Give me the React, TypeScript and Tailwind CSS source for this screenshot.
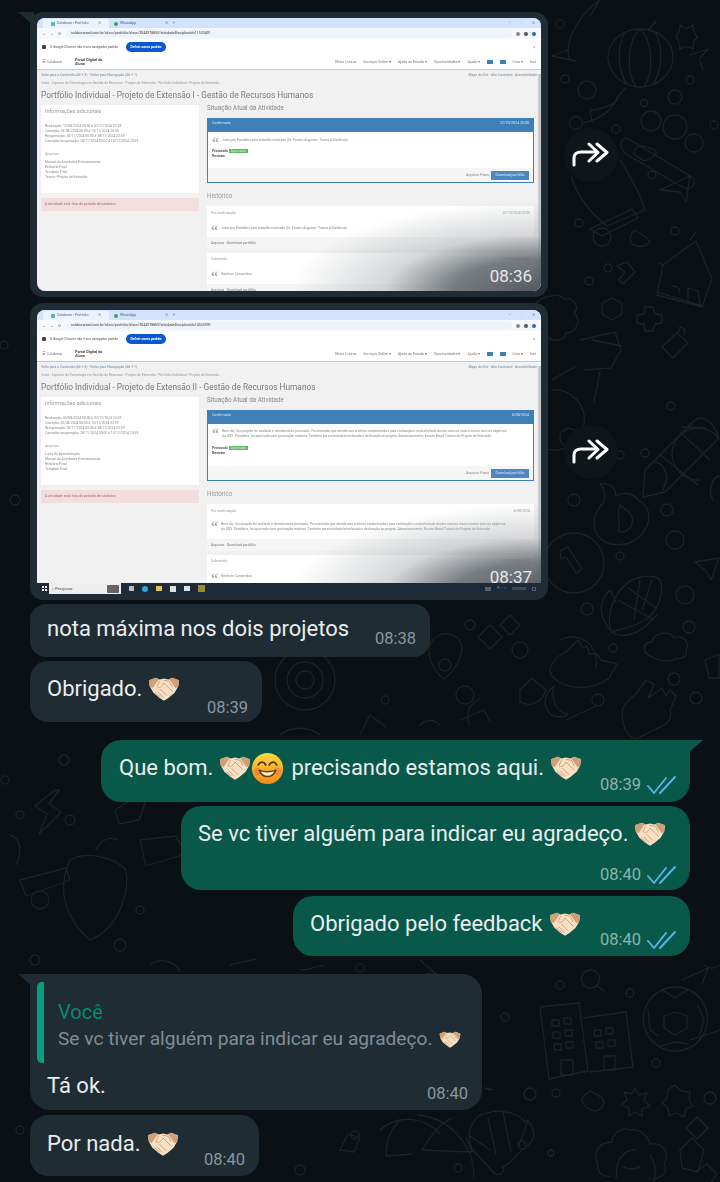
const circles: [number, number, number][] = [
  [565, 79, 4], [587, 90, 9], [560, 24, 4], [675, 97, 7], [690, 80, 4], [644, 103, 3.5], [576, 123, 6.5], [616, 129, 4],
  [651, 121, 10], [675, 127, 12], [694, 143, 9], [714, 125, 4], [652, 175, 4], [602, 237, 9], [579, 223, 4], [675, 231, 4],
  [608, 268, 4], [589, 281, 4], [574, 500, 6], [667, 510, 6], [675, 540, 9], [620, 556, 4], [685, 595, 9], [689, 627, 6],
  [587, 609, 6], [613, 648, 4], [598, 700, 6], [674, 679, 6], [696, 698, 6], [620, 455, 4], [671, 406, 4], [645, 453, 4],
  [505, 1017, 4], [560, 985, 4], [630, 993, 4], [556, 1093, 4], [530, 1094, 6], [656, 1063, 4], [710, 1098, 6], [522, 1145, 4],
  [551, 1153, 3], [458, 1168, 4], [470, 625, 5], [305, 680, 30], [305, 680, 18], [305, 680, 9], [385, 700, 4], [465, 695, 9],
  [445, 665, 6], [520, 650, 8], [35, 960, 5], [70, 820, 5], [64, 760, 5], [20, 815, 4], [140, 910, 4], [40, 900, 9],
  [120, 945, 6], [250, 980, 5], [360, 968, 4], [20, 1130, 4], [300, 1170, 5], [355, 1135, 4], [5, 780, 4], [560, 790, 4],
  [545, 775, 3], [15, 500, 5], [4, 345, 4],
];

const paths = [
  // fish, lantern
  "M570 60c-6-14 3-40 30-60M568 50l-16 6 24 5M600 0l-10 16",
  "M640 29c-18 0-32 13-32 28s14 30 32 30 33-14 33-30-15-28-33-28zM640 29c-12 10-15 42-4 58M640 29c12 10 15 42 4 58M625 32c-8 14-8 38 2 52M655 32c8 14 8 38-2 52",
  "M648 30l8-9M625 88l-8 10c-4 10-12 20-34 25M592 122l-2-12c10 0 22-4 28-11",
  "M680 25c4 4 9 4 13 0 0 5 1 9 4 12-3 3-4 7-4 12-4-3-9-3-13 0 0-5-1-9-4-12 3-3 4-7 4-12z",
  "M690 55l18-6-8 9M700 60l3 10",
  // finger hand, rocket
  "M630 140l60 36c8 5 3 15-6 12l-58-34c-10-8-3-20 4-14zM647 147c-8-3-14 2-13 7l10 7c6-2 14-6 12-10-2-3-6-2-9-4z",
  "M620 160c14 22 22 40 25 50l-38 16c-18-14-30-30-36-50M590 229l42-20 6 9-36 18z",
  "M660 190l30-14-4 26-6-10z",
  "M634 230c8 4 14 8 16 12l-6 4c-16 2-16-8-10-16z",
  "M627 262l8 10-12 12-4-4 6-8-8-6z",
  // house
  "M657 295l6-30 33-24 16 38-10 28zM663 265l-4-2M657 292l46 14M690 240l6-8M672 286c4 0 8 2 8 6M688 288l10 3 2 14-12-3z",
  "M612 298l10 5v11l-10 6-10-6v-11zM645 307l8 0 2 7 7 1v8l-7 1-2 7h-8l-1-7-7-1v-8l7-1z",
  "M662 347l15-14 11 10-15 15zM678 333l2-6 5 2-1 6",
  "M552 296c4-2 10 0 12 3 10-2 16 8 10 14 8 8 2 20-8 20 0 8-14 10-20 2-8 2-16-8-12-14-6-10 2-24 18-25z",
  "M580 340l35-8 6 18-10 18-26 2M592 340l30 6",
  // pencil, flame, badge
  "M645 470l50-50c5-4 12-2 18 6s6 12 2 16l-50 50-22 5zM651 464c6-4 14 0 16 14l-4 12M660 455l38 30M680 432l30 28",
  "M600 484c10-2 18 6 15 12 8-4 18-4 23 4 12 6 15 20 4 34-12 14-34 14-44 2-8-14-2-26 6-34 2-8 0-14-4-18zM620 505c-4 10 2 20-2 26 8 4 16-4 14-14-2-6-8-8-12-12z",
  "M574 533a30 30 0 1 0 0 60 30 30 0 1 0 0-60zM560 551l8-4 14 22-6 4-10-16-5 2z",
  "M552 390a30 30 0 1 1-8 58M560 438a9 9 0 1 0 0-1zM552 380l24-14M600 372l-6 30",
  "M706 428l-24-1M700 480a26 26 0 1 1 20-40M713 500c-6-10 0-24 7-24",
  // corn
  "M612 632c-6-10-2-30 10-44 12-14 34-14 38-8 4 10 0 28-12 38-14 10-26 10-36 14zM618 600l36 20M628 588l28 20M640 580l-6 40M652 580l-10 30M612 632c-14-14-14-30-2-42l6 12M612 632c8 6 24 4 36-8 5-5 8-8 9-10",
  "M695 562l24-4-8 22-6-10z",
  // hands, cloud, moon
  "M550 668c4-8 10-14 16-16l12-12 5 8 4-2 2 8 8 0 4 6 16 4-8 14c-18 14-40 10-50 4-6-4-10-8-9-14z",
  "M622 714c0-10 8-16 14-20l10-14 8 4-6 14 14-10 4 8 4-6 6 6-6 14c2 6 0 10-4 14l-28 14c-10 2-16-12-16-24z",
  "M650 656c-8-4-8-14 2-14 2-10 18-12 22-4 10-4 16 4 12 12 2 6-4 10-10 8-4 4-16 4-26-2z",
  "M554 686c-10 8-12 20-4 28 6 4 14 4 18 0-10 0-18-14-14-28z",
  "M705 660l14-6v24h-10z",
  // left margin doodles
  "M70 860c-14 30-4 60 20 80 30-12 40-50 36-70-10-12-40-20-56-10zM96 850c4-10 14-14 22-10",
  "M55 790l-20 16 12 8-8 20 22-22-12-8 10-14z",
  "M115 810l28-18 4 6-8 22-20 4zM20 880l46-12 4 12-44 16z",
  "M120 990l52-10M140 840l36-4 10 18-40 12zM10 835c8 2 14 14 6 30",
  // bottom right
  "M540 1007l39-4 9 68-39 8zM583 1018l43-6 7 55-43 5M552 1020h7v6h-7zM564 1018h7v6h-7zM553 1032h7v6h-7zM565 1030h7v6h-7zM554 1044h7v6h-7zM566 1042h7v6h-7zM594 1030h7v6h-7zM606 1028h7v6h-7zM596 1042h7v6h-7zM608 1040h7v6h-7zM561 1060h12v15h-12zM604 1056h11v14h-11z",
  "M675 987a32 32 0 1 0 1 0zM675 1012l12 4v12l-12 7-11-7v-12zM662 990l13 8 12-8M648 1010l2 20 8 6M698 1006l6 14-4 14M660 1046l14-4 14 2",
  "M590 970a9 9 0 1 0 1 0zM596 985l8 6",
  "M480 1115c-10 8-14 20-8 34l22 24c6 4 12-2 8-6 10-2 14-14 22-18l8-8c4-8 0-20-8-20-4-6-16-10-30-10zM503 1112l8 40M488 1118l8 36M528 1120l-10 28M470 1136l20 14",
  "M630 1130c10-2 18 6 20 14 14-2 20 10 14 20 6 8-6 18-16 14M630 1130c-8-4-18 4-18 12-14 0-20 12-14 22-2 8 6 14 12 12",
  "M635 1150c-14 0-20 14-18 28M650 1156c6 8 6 18 4 26M622 1166c6 4 14 4 18 0",
  "M590 1091c-4 4-8 4-8 10 2 6 8 10 14 10 6-2 8-6 8-10-4-6-10-8-14-10z",
  "M635 1088l4 7 8-2-3 8 6 5-8 3v7l-7-4-6 4v-8l-8-3 6-5-3-8 8 2z",
  "M675 1085l6 6 9 1-1 8 4 6-7 3-2 8-7-4-8 3-1-8-6-5 5-5 1-8z",
  "M697 1117l11 11-11 11-11-11zM680 1150l12-12 12 12-6 22-16-4z",
  "M695 1172l12-8 10 10-6 8M690 1040l30-10M682 980l26-12-6 16M704 965c6 4 10 4 16 0",
  "M492 1090l-8-2M452 1118c-12 6-22 18-30 32l50 2-6-14M400 1120c-10 10-14 22-14 36l26-2M340 1150l8-16 12 4-6 14z",
  "M418 1115a62 62 0 0 1 56 62M380 1130a42 42 0 0 1 60 4",
  // middle gaps
  "M440 635c10-4 22 2 22 14-2 16-12 26-18 30-10-8-18-22-14-34 2-6 6-8 10-10zM500 625l10-10 10 10-10 10zM490 625l-12 12 12 12 12-12z",
  "M520 690l12-12 14 12c-4 12-14 18-26 12zM560 640c20-10 40 6 36 28M566 720l30-14M470 725c-6-12 0-22 10-26",
  "M460 720l24-10 6 12M280 735c12-10 30-8 40 0M360 735l10-20 16 12M420 725c6-6 14-6 20 0",
  "M150 965c10-8 24-4 30 6M300 970c12 0 20-6 24-4M230 965l26-6M420 960l16 14-10 0",
];

function Wallpaper() {
  return (
    <svg viewBox="0 0 720 1182" fill="none" stroke="#1b2426" strokeWidth="1.3" strokeLinecap="round" strokeLinejoin="round" className="absolute inset-0 h-[1182px] w-[720px]">
      {circles.map(([cx, cy, r], i) => (
        <circle key={i} cx={cx} cy={cy} r={r} />
      ))}
      {paths.map((d, i) => (
        <path key={i} d={d} />
      ))}
    </svg>
  );
}

function Handshake({ size = 32 }: { size?: number }) {
  return (
    <svg width={size} height={size * 0.86} viewBox="0 0 36 31" className="shrink-0">
      <path d="M1 6l8-3 4 2 5-1 5 1 4-2 8 3-1 7-4 7-7 6-5 3-5-3-7-6-4-7z" fill="#f7dfc4" />
      <path d="M1 6l8-3 3 2-7 10-3-2zM35 6l-8-3-3 2 7 10 3-2z" fill="#cf9f78" />
      <path d="M13 7l-3 6c2 2 5 1 6-1l2-3 9 9M18 6l6 1 3 6M11 19l6 6M14 16l7 7M8 20l6 5" fill="none" stroke="#d2a27e" strokeWidth="1.1" strokeLinecap="round" strokeLinejoin="round" />
    </svg>
  );
}

function Smile() {
  return (
    <svg width="33" height="33" viewBox="0 0 36 36" className="shrink-0">
      <defs>
        <linearGradient id="smile" x1="0" y1="0" x2="0" y2="1">
          <stop offset="0" stopColor="#fbdc3f" />
          <stop offset="1" stopColor="#f28a1c" />
        </linearGradient>
      </defs>
      <circle cx="18" cy="18" r="17" fill="url(#smile)" />
      <circle cx="7" cy="21" r="4" fill="#f0634f" opacity=".5" />
      <circle cx="29" cy="21" r="4" fill="#f0634f" opacity=".5" />
      <path d="M8 14c2-4 6-4 8 0M20 14c2-4 6-4 8 0" fill="none" stroke="#5b3413" strokeWidth="2" strokeLinecap="round" />
      <path d="M9 20c4 9 14 9 18 0-6 2-12 2-18 0z" fill="#fff1c8" stroke="#6b3a12" strokeWidth="1.6" strokeLinejoin="round" />
    </svg>
  );
}

function Ticks() {
  return (
    <svg width="30" height="20" viewBox="0 0 30 20" fill="none" stroke="#57b6e4" strokeWidth="1.9" strokeLinecap="round" strokeLinejoin="round">
      <path d="M2 11l6 7L20 3M14 18L29 2" />
    </svg>
  );
}

function ForwardButton() {
  return (
    <div className="ml-4 flex h-[54px] w-[54px] shrink-0 items-center justify-center rounded-full bg-[#0f1619]">
      <svg width="40" height="26" viewBox="0 0 40 26" fill="none" stroke="#fff" strokeWidth="3" strokeLinecap="round" strokeLinejoin="round">
        <path d="M3 23v-7c0-4 3-6 7-6h14" />
        <path d="M18 2l9 8.500-9 8.500M26 2l10 8.500-10 8.500" />
      </svg>
    </div>
  );
}

function Time({ children, sent = false }: { children: string; sent?: boolean }) {
  return <span className={`text-[16.5px] leading-[20px] ${sent ? "text-[#8db4ab]" : "text-[#8a979f]"}`}>{children}</span>;
}

function Tail({ side }: { side: "left" | "right" }) {
  return side === "left" ? (
    <svg width="16" height="14" viewBox="0 0 16 14" className="absolute top-0 left-[-12px]">
      <path d="M0 0h16v14z" fill="#1f2c34" />
    </svg>
  ) : (
    <svg width="16" height="14" viewBox="0 0 16 14" className="absolute top-0 right-[-13px]">
      <path d="M16 0H0v14z" fill="#08594a" />
    </svg>
  );
}

type ShotProps = {
  title: string;
  url: string;
  dates: string[];
  files: string[];
  date: string;
  comment: string[];
  grade: string;
  time: string;
  alert: string;
  taskbar?: boolean;
};

function MiniLine({ children }: { children: string }) {
  return <p className="text-[3.4px] leading-[5px] whitespace-nowrap text-[#8a8a8a]">{children}</p>;
}

function Quote({ lines }: { lines: string[] }) {
  return (
    <div className="flex gap-[3px]">
      <span className="h-[7px] font-['Liberation_Serif',serif] text-[14px] leading-[14px] font-bold text-[#aaa]">“</span>
      <div className="pt-[2px]">
        {lines.map((l) => (
          <MiniLine key={l}>{l}</MiniLine>
        ))}
      </div>
    </div>
  );
}

function Screenshot({ title, url, dates, files, date, comment, grade, time, alert, taskbar }: ShotProps) {
  const two = comment.length > 1;
  return (
    <div className={`relative w-[504px] overflow-hidden rounded-t-[8px] bg-[#f1f1f1] font-['Roboto',sans-serif] leading-[5px] ${taskbar ? "h-[284px]" : "h-[273px] rounded-b-[8px]"}`}>
      <div className="blur-[0.3px]">
        <div className="flex h-[10px] items-end bg-[#d3e3fd] pl-[6px] text-[3.5px] text-[#666]">
          <div className="flex h-[9px] w-[66px] items-center gap-[2px] rounded-t-[3px] bg-[#edf3fe] px-[8px]">
            <span className="h-[4px] w-[4px] rounded-[1px] bg-[#4db6c6]" />
            <span className="flex-1 whitespace-nowrap">Colaborar - Portfolio</span>
            <span>✕</span>
          </div>
          <div className="ml-[2px] flex h-[9px] w-[60px] items-center gap-[2px] px-[3px]">
            <span className="h-[4px] w-[4px] rounded-full bg-[#34a853]" />
            <span className="flex-1">WhatsApp</span>
            <span>✕</span>
          </div>
          <span className="mb-[2px] ml-[2px]">+</span>
          <div className="mr-[6px] mb-[2px] ml-auto flex gap-[10px]">
            <span>–</span>
            <span>▫</span>
            <span>✕</span>
          </div>
        </div>
        <div className="flex h-[11px] items-center gap-[4px] bg-[#f5f8fd] px-[5px] text-[4px] text-[#666]">
          <span>←</span>
          <span>→</span>
          <span>⟳</span>
          <div className="ml-[2px] flex h-[7px] flex-1 items-center rounded-full bg-[#eef2f9] px-[4px] text-[3.5px] text-[#444]">{url}</div>
          <span className="h-[4px] w-[4px] rounded-full bg-[#888]" />
          <span className="h-[4px] w-[4px] rounded-full bg-[#555]" />
          <span className="h-[4px] w-[4px] rounded-full bg-[#3367b5]" />
        </div>
        <div className="flex h-[16px] items-center gap-[4px] bg-white px-[5px] text-[3.3px] text-[#555]">
          <span className="h-[4px] w-[4px] rounded-[1px] bg-[#444]" />
          <span className="w-[72px] whitespace-nowrap">O Google Chrome não é seu navegador padrão</span>
          <span className="flex h-[10px] w-[40px] items-center justify-center rounded-full bg-[#0b57d0] text-[3.4px] font-bold text-white">Definir como padrão</span>
          <span className="ml-auto">✕</span>
        </div>
        <div className="flex h-[15px] items-center border-b border-[#a9d3dd] bg-white px-[5px] text-[3.6px] text-[#777]">
          <span className="w-[33px]">☰ Colaborar</span>
          <span className="w-[30px] text-[3.8px] leading-[4.5px] font-bold text-[#444]">Portal Digital do Aluno</span>
          <div className="ml-auto flex items-center gap-[7px]">
            <span>Meus Cursos</span>
            <span>Serviços Online ▾</span>
            <span>Ajuda ao Estudo ▾</span>
            <span>Oportunidades ▾</span>
            <span>Ajuda ▾</span>
            <span className="h-[4px] w-[6px] bg-[#3f7fb8]" />
            <span className="h-[4px] w-[6px] bg-[#3f7fb8]" />
            <span>Lívia ▾</span>
            <span>Sair</span>
          </div>
        </div>
        <div className="px-[4px] pt-[1px]">
          <div className="flex h-[8px] items-center justify-between text-[3.4px] text-[#6d8aa5]">
            <span>Volta para o Conteúdo (Alt + 3) · Voltar para Navegação (Alt + 1)</span>
            <span>Mapa do Site · Alto Contraste · Acessibilidade</span>
          </div>
          <div className="flex h-[8px] items-center text-[3.4px] text-[#8a9bac]">
            Início · Superior de Tecnologia em Gestão de Recursos · Projeto de Extensão · Portfólio Individual - Projeto de Extensão
          </div>
          <h1 className="mt-[2px] h-[16px] text-[8.3px] leading-[12px] font-normal whitespace-nowrap text-[#7b7b7b]">{title}</h1>
          <div className="flex gap-[8px]">
            <div className="w-[158px] shrink-0">
              <div className="h-[88px] bg-white px-[4px] pt-[2px]">
                <h2 className="text-[5.4px] leading-[8px] font-normal text-[#999]">Informações adicionais</h2>
                <div className="mt-[9px]">
                  {dates.map((d) => (
                    <MiniLine key={d}>{d}</MiniLine>
                  ))}
                </div>
                <p className="mt-[8px] text-[3.6px] text-[#999]">Arquivos</p>
                <div className="mt-[3px]">
                  {files.map((f) => (
                    <MiniLine key={f}>{f}</MiniLine>
                  ))}
                </div>
              </div>
              <div className="mt-[5px] flex h-[13px] items-center bg-[#f2dede] px-[4px] text-[3.6px] text-[#a66]">{alert}</div>
            </div>
            <div className="min-w-0 flex-1 pr-[3px]">
              <h2 className="mt-[-3px] h-[16px] text-[6.3px] leading-[12px] font-normal text-[#888]">Situação Atual da Atividade</h2>
              <div className="border border-[#3f7fb8] bg-white">
                <div className="flex h-[13px] items-start justify-between bg-[#3f7fb8] px-[4px] pt-[2px] text-[3.6px] text-[#dbe8f3]">
                  <span>Confirmado</span>
                  <span>{date}</span>
                </div>
                <div className={`px-[4px] ${two ? "h-[42px] pt-[3px]" : "h-[36px] pt-[4px]"}`}>
                  <Quote lines={comment} />
                  <div className={`text-[3.6px] leading-[5px] font-bold text-[#555] ${two ? "mt-[7px]" : "mt-[6px]"}`}>
                    <p>
                      Protocolo <span className="bg-[#5cb85c] px-[2px] font-normal text-[#d7f0d7]">{grade}</span>
                    </p>
                    <p>Revisão</p>
                  </div>
                </div>
                <div className="flex h-[14px] items-center justify-end gap-[2px] bg-[#f5f5f5] px-[4px] text-[3.4px] text-[#888]">
                  <span>Arquivos Finais</span>
                  <span className="flex h-[9px] w-[38px] items-center justify-center bg-[#4d87c0] text-[#dbe8f3]">Download portfólio</span>
                </div>
              </div>
              <h2 className="mt-[7px] h-[16px] text-[6.3px] leading-[12px] font-normal text-[#999]">Histórico</h2>
              <div className={`bg-white px-[4px] pt-[5px] ${two ? "h-[35px]" : "h-[31px]"}`}>
                <div className="flex justify-between text-[3.4px] text-[#999]">
                  <span>Por confirmação</span>
                  <span>{date}</span>
                </div>
                <div className={two ? "mt-[6px]" : "mt-[8px]"}>
                  <Quote lines={comment} />
                </div>
              </div>
              <div className="flex h-[12px] items-center bg-[#f5f5f5] px-[4px] text-[3.4px] text-[#777]">Arquivos · Download portfólio</div>
              <div className="mt-[4px] h-[31px] bg-white px-[4px] pt-[4px]">
                <div className="flex justify-between text-[3.4px] text-[#999]">
                  <span>Submetido</span>
                  <span>22/05/2025 08:00</span>
                </div>
                <div className="mt-[8px]">
                  <Quote lines={["Nenhum Comentário"]} />
                </div>
              </div>
              <div className="flex h-[12px] items-center bg-[#f5f5f5] px-[4px] text-[3.4px] text-[#777]">Arquivos · Download portfólio</div>
            </div>
          </div>
        </div>
      </div>
      <div className="absolute top-[56px] right-0 bottom-0 w-[3px] bg-[#c9c9c9]" />
      <div className="absolute right-0 bottom-0 h-[90px] w-[250px] bg-[radial-gradient(ellipse_farthest-side_at_bottom_right,rgba(75,82,88,0.95)_0%,rgba(95,101,106,0.85)_35%,rgba(170,175,178,0.5)_62%,rgba(255,255,255,0)_100%)]" />
      {taskbar && (
        <div className="absolute right-0 bottom-0 left-0 flex h-[11px] items-center bg-[#1d2b39] text-[3.6px] text-[#555]">
          <span className="ml-[5px] grid h-[5px] w-[5px] grid-cols-2 gap-[0.5px]">
            <i className="bg-white" />
            <i className="bg-white" />
            <i className="bg-white" />
            <i className="bg-white" />
          </span>
          <div className="ml-[2px] flex h-[11px] w-[72px] items-center justify-between bg-[#eee] pr-[2px] pl-[3px] text-[4px]">
            <span>⌕ Pesquisar</span>
            <span className="h-[8px] w-[12px] rounded-[1px] bg-[#666]" />
          </div>
          <div className="ml-[8px] flex items-center gap-[8px]">
            <span className="h-[5px] w-[5px] bg-[#bbb]" />
            <span className="h-[6px] w-[6px] rounded-full bg-[#2fa6d8]" />
            <span className="h-[5px] w-[6px] bg-[#e6c34d]" />
            <span className="h-[6px] w-[6px] bg-[#d6e4e0]" />
            <span className="h-[5px] w-[6px] bg-[#d8e4ef]" />
            <span className="h-[7px] w-[7px] bg-[#9a8a30]" />
          </div>
          <div className="mr-[5px] ml-auto flex items-center gap-[6px] text-[#6f7c88]">
            <span className="h-[4px] w-[6px] bg-[#56616c]" />
            <span>ᐱ ⌁ ◖</span>
            <span className="h-[3px] w-[14px] bg-[#3c4854]" />
            <span className="h-[4px] w-[4px] border border-[#56616c]" />
          </div>
        </div>
      )}
      <span className={`absolute right-[9px] text-[17px] leading-[20px] text-[#e8e8e8] ${taskbar ? "bottom-[7px]" : "bottom-[5px]"}`}>{time}</span>
    </div>
  );
}

function ImageMessage({ tail, shot }: { tail?: boolean; shot: ShotProps }) {
  return (
    <div className="flex items-center">
      <div className={`relative rounded-[13px] bg-[#1f2c34] px-[7px] ${shot.taskbar ? "pt-[7px] pb-[6px]" : "pt-[6px] pb-[6px]"}`}>
        {tail && <Tail side="left" />}
        <Screenshot {...shot} />
      </div>
      <ForwardButton />
    </div>
  );
}

const shotOne: ShotProps = {
  title: "Portfólio Individual - Projeto de Extensão I - Gestão de Recursos Humanos",
  url: "colaboraread.com.br/aluno/portfolio/show/3044978855?atividadeDisciplinaId=11533401",
  dates: [
    "Realização: 15/08/2024 00:00 à 02/11/2024 23:59",
    "Correção: 18/08/2024 08:00 à 15/11/2024 23:59",
    "Recuperação: 20/11/2024 00:00 à 28/11/2024 23:59",
    "Correção recuperação: 28/11/2024 00:00 à 13/12/2024 23:59",
  ],
  files: ["Manual de Atividades Extensionistas", "Relatório Final", "Template Final", "Termo - Projeto de Extensão"],
  date: "22/10/2024 20:00",
  comment: ["Justo pai Parabéns pelo trabalho realizado (Dr. Fausto Augusto - Tutora à Distância)"],
  grade: "Aprovado",
  time: "08:36",
  alert: "A atividade está fora do período de cadastro",
};

const shotTwo: ShotProps = {
  title: "Portfólio Individual - Projeto de Extensão II - Gestão de Recursos Humanos",
  url: "colaboraread.com.br/aluno/portfolio/show/3044978855?atividadeDisciplinaId=14553390",
  dates: [
    "Realização: 05/08/2024 00:00 à 02/11/2024 23:59",
    "Correção: 20/08/2024 08:00 à 15/11/2024 23:59",
    "Recuperação: 20/11/2024 00:00 à 28/11/2024 23:59",
    "Correção recuperação: 28/11/2024 00:00 à 13/12/2024 23:59",
  ],
  files: ["Carta de Apresentação", "Manual de Atividades Extensionistas", "Relatório Final", "Template Final"],
  date: "6/08/2024",
  comment: [
    "Bom dia, Seu projeto foi avaliado e devidamente pontuado. Foi atestado que atende aos critérios estabelecidos para realização e está alinhado dentro com os macro temas com os objetivos",
    "do ODS. Parabéns, foi aprovado com pontuação máxima. Também para entidade beneficiada e dedicação ao projeto. Atenciosamente, Fausto Brasil Tutoria do Projeto de Extensão",
  ],
  grade: "Aprovado",
  time: "08:37",
  alert: "A atividade está fora do período de cadastro",
  taskbar: true,
};

export default function App() {
  return (
    <div className="relative h-[1182px] w-[720px] overflow-hidden bg-[#0a1013] font-['Roboto',sans-serif] text-[22px] leading-[26px] text-[#e9edef]">
      <Wallpaper />
      <div className="relative flex flex-col pt-[12px] pl-[30px]">
        <ImageMessage tail shot={shotOne} />
        <div className="mt-[6px]">
          <ImageMessage shot={shotTwo} />
        </div>

        <div className="mt-[4px] flex h-[53px] w-[400px] justify-between rounded-[16px] bg-[#1f2c34] pt-[12px] pr-[14px] pb-[7px] pl-[17px]">
          <span>nota máxima nos dois projetos</span>
          <span className="self-end">
            <Time>08:38</Time>
          </span>
        </div>

        <div className="mt-[4px] flex h-[61px] w-[232px] justify-between rounded-[18px] bg-[#1f2c34] pt-[15px] pr-[14px] pb-[3px] pl-[17px]">
          <span className="flex h-[26px] items-center gap-[6px]">
            Obrigado. <Handshake />
          </span>
          <span className="self-end">
            <Time>08:39</Time>
          </span>
        </div>

        <div className="relative mt-[18px] ml-[71px] flex h-[62px] w-[589px] justify-between rounded-[20px] rounded-tr-none bg-[#08594a] pt-[15px] pr-[14px] pb-[7px] pl-[18px]">
          <Tail side="right" />
          <span className="flex h-[26px] items-center">
            Que bom.
            <span className="ml-[6px] flex items-center">
              <Handshake />
              <Smile />
            </span>
            <span className="ml-[7px]">precisando estamos aqui.</span>
            <span className="ml-[6px]">
              <Handshake />
            </span>
          </span>
          <span className="flex items-center gap-[5px] self-end">
            <Time sent>08:39</Time>
            <Ticks />
          </span>
        </div>

        <div className="mt-[4px] ml-[151px] flex h-[84px] w-[509px] flex-col justify-between rounded-[20px] bg-[#08594a] pt-[15px] pr-[14px] pb-[5px] pl-[17px]">
          <span className="flex h-[26px] items-center gap-[6px]">
            Se vc tiver alguém para indicar eu agradeço. <Handshake />
          </span>
          <span className="flex items-center justify-end gap-[5px]">
            <Time sent>08:40</Time>
            <Ticks />
          </span>
        </div>

        <div className="mt-[6px] ml-[263px] flex h-[60px] w-[397px] justify-between rounded-[20px] bg-[#08594a] pt-[15px] pr-[14px] pb-[6px] pl-[17px]">
          <span className="flex h-[26px] items-center gap-[6px]">
            Obrigado pelo feedback <Handshake />
          </span>
          <span className="flex items-center gap-[5px] self-end">
            <Time sent>08:40</Time>
            <Ticks />
          </span>
        </div>

        <div className="relative mt-[18px] flex h-[136px] w-[452px] flex-col rounded-[20px] rounded-tl-none bg-[#1f2c34] pt-[8px] pr-[14px] pb-[5px] pl-[7px]">
          <Tail side="left" />
          <div className="flex h-[81px] rounded-l-[5px] border-l-[7px] border-[#06a07f] pl-[14px]">
            <div className="flex flex-col pt-[18px]">
              <span className="text-[20px] leading-[24px] text-[#0a8a70]">Você</span>
              <span className="mt-[2px] flex items-center gap-[6px] text-[19.15px] leading-[26px] whitespace-nowrap text-[#7f8d97]">
                Se vc tiver alguém para indicar eu agradeço. <Handshake size={22} />
              </span>
            </div>
          </div>
          <div className="mt-[10px] flex flex-1 justify-between pl-[10px]">
            <span>Tá ok.</span>
            <span className="self-end">
              <Time>08:40</Time>
            </span>
          </div>
        </div>

        <div className="mt-[5px] flex h-[61px] w-[229px] justify-between rounded-[18px] bg-[#1f2c34] pt-[16px] pr-[14px] pb-[5px] pl-[17px]">
          <span className="flex h-[26px] items-center gap-[6px]">
            Por nada. <Handshake />
          </span>
          <span className="self-end">
            <Time>08:40</Time>
          </span>
        </div>
      </div>
    </div>
  );
}
